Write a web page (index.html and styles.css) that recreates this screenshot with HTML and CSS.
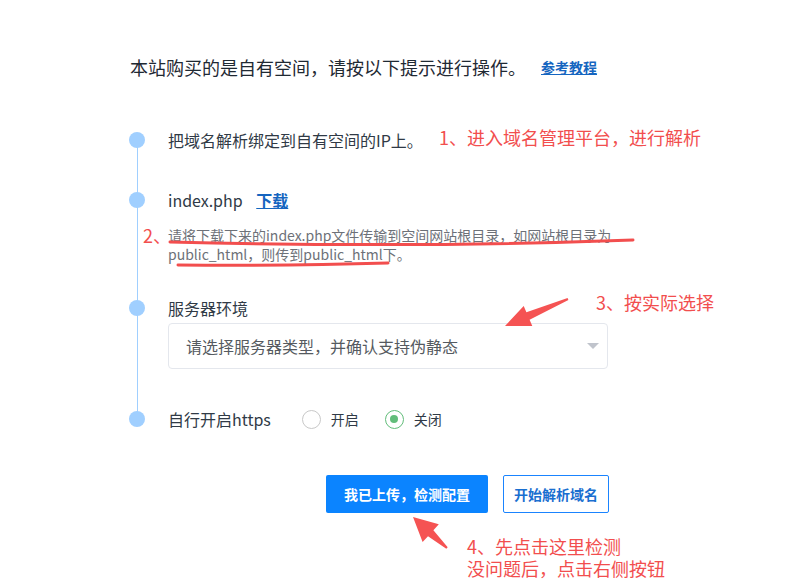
FILE: index.html
```html
<html>
    <head>
        <title>自有空间配置</title>

        <link rel="stylesheet" href="styles.css">
    </head>
    <body>
        <div class="page">
            <div class="intro">
                <span class="intro-text">本站购买的是自有空间，请按以下提示进行操作。</span>
                <a href="#" class="guide-link">参考教程</a>
            </div>

            <div class="steps">
                <!-- STEP 1 -->
                <div class="step">
                    <span class="dot"></span>
                    <div class="step-body">
                        <div class="step-title">把域名解析绑定到自有空间的IP上。</div>
                    </div>
                </div>

                <!-- STEP 2 -->
                <div class="step step-file">
                    <span class="dot"></span>
                    <div class="step-body">
                        <div class="step-title">index.php <a href="#" class="down-link">下载</a></div>
                        <div class="step-desc">请将下载下来的index.php文件传输到空间网站根目录，如网站根目录为public_html，则传到public_html下。</div>
                    </div>
                </div>

                <!-- STEP 3 -->
                <div class="step step-server">
                    <span class="dot"></span>
                    <div class="step-body">
                        <div class="step-title">服务器环境</div>
                        <div class="select">
                            <span>请选择服务器类型，并确认支持伪静态</span>
                            <span class="caret"></span>
                        </div>
                    </div>
                </div>

                <!-- STEP 4 -->
                <div class="step step-https">
                    <span class="dot"></span>
                    <div class="step-body step-inline">
                        <div class="step-title">自行开启https</div>
                        <div class="radio-group">
                            <label class="radio"><span class="radio-circle"></span>开启</label>
                            <label class="radio checked"><span class="radio-circle"></span>关闭</label>
                        </div>
                    </div>
                </div>
            </div>

            <div class="actions">
                <button class="btn btn-primary">我已上传，检测配置</button>
                <button class="btn btn-plain">开始解析域名</button>
            </div>
        </div>

        <!-- red notes drawn over the page -->
        <div class="notes">
            <svg class="marks" width="812" height="583" viewBox="0 0 812 583">
                <path d="M170 242 Q 420 248 633 240" class="stroke" />
                <path d="M178 265 Q 290 266 388 263" class="stroke" />
                <polygon class="arrow" points="505,326 532.3,326.1 529.6,319.7 568.4,299.9 567.6,298.1 526.4,312.3 523.7,305.9" />
                <polygon class="arrow" points="413,517 422.6,542.1 428,536.2 446.3,548.7 447.7,547.3 433.4,530.2 438.8,524.3" />
            </svg>
            <span class="note note-1">1、进入域名管理平台，进行解析</span>
            <span class="note note-2">2、</span>
            <span class="note note-3">3、按实际选择</span>
            <div class="note note-4">
                <div>4、先点击这里检测</div>
                <div>没问题后，点击右侧按钮</div>
            </div>
        </div>
    </body>
</html>
```

FILE: styles.css
```css
body{
    margin: 0;
    background: white;
    font-family: "Noto Sans CJK SC", "Noto Sans", sans-serif;
    color: #303a46;
}

.page{
    padding: 55px 0 0 130px;
}

.intro{
    display: flex;
    align-items: center;
    height: 24px;
}

.intro-text{
    font-size: 18px;
    line-height: 24px;
    color: #1f2933;
}

.guide-link{
    margin-left: 15px;
    font-size: 14px;
    font-weight: bold;
    color: #1565c0;
    text-decoration: underline;
}

.steps{
    position: relative;
    margin: 50px 0 0 -1px;
}

/* the thin line that joins the dots */
.steps::before{
    content: "";
    position: absolute;
    left: 7.5px;
    top: 11px;
    bottom: 11px;
    width: 1px;
    background: #a0cfff;
}

.step{
    display: flex;
    align-items: flex-start;
}

.dot{
    position: relative;
    flex: none;
    width: 16px;
    height: 16px;
    margin-top: 3px;
    margin-right: 23px;
    border-radius: 50%;
    background: #a0cfff;
}

.step-title{
    font-size: 16px;
    line-height: 22px;
    color: #303a46;
}

.down-link{
    margin-left: 10px;
    font-weight: bold;
    color: #1565c0;
    text-decoration: underline;
}

.step-file{
    margin-top: 38px;
}

.step-desc{
    width: 452px;
    margin-top: 15px;
    font-size: 14px;
    line-height: 19px;
    color: #6d7178;
}

.step-server{
    margin-top: 33px;
}

.select{
    display: flex;
    align-items: center;
    justify-content: space-between;
    box-sizing: border-box;
    width: 440px;
    height: 46px;
    margin-top: 4px;
    padding: 0 8px 0 17px;
    border: 1px solid #e4e7ed;
    border-radius: 4px;
    font-size: 16px;
    color: #555a60;
}

.caret{
    width: 0;
    height: 0;
    border-left: 6px solid transparent;
    border-right: 6px solid transparent;
    border-top: 6px solid #c0c4cc;
}

.step-https{
    margin-top: 39px;
}

.step-inline{
    display: flex;
    align-items: center;
}

.radio-group{
    display: flex;
    gap: 26px;
    margin-left: 31px;
}

.radio{
    display: flex;
    align-items: center;
    gap: 10px;
    font-size: 14px;
    color: #303a46;
}

.radio-circle{
    box-sizing: border-box;
    width: 19px;
    height: 19px;
    border: 1px solid #c8c8c8;
    border-radius: 50%;
    display: flex;
    align-items: center;
    justify-content: center;
}

.checked .radio-circle{
    border-color: #62bd7a;
}

.checked .radio-circle::after{
    content: "";
    width: 8px;
    height: 8px;
    border-radius: 50%;
    background: #62bd7a;
}

.actions{
    display: flex;
    gap: 15px;
    margin: 45px 0 0 196px;
}

.btn{
    height: 38px;
    font-family: inherit;
    font-size: 14px;
    font-weight: bold;
    border-radius: 2px;
}

.btn-primary{
    padding: 0 18px;
    background: #0b84ff;
    color: white;
    border: 0px;
}

.btn-plain{
    padding: 0 10px;
    background: white;
    color: #1a6fd0;
    border: 1px solid #1a84ff;
}

.notes{
    position: absolute;
    left: 0;
    top: 0;
    width: 812px;
    height: 583px;
    pointer-events: none;
}

.marks{
    position: absolute;
    left: 0;
    top: 0;
}

.stroke{
    fill: none;
    stroke: #f24e4e;
    stroke-width: 3;
    stroke-linecap: round;
}

.arrow{
    fill: #f55353;
}

.note{
    position: absolute;
    font-size: 18px;
    line-height: 22px;
    color: #f24e4e;
    white-space: nowrap;
}

.note-1{ left: 439px; top: 126px; }
.note-2{ left: 143px; top: 224px; }
.note-3{ left: 596px; top: 291px; }
.note-4{ left: 467px; top: 535px; }
```
